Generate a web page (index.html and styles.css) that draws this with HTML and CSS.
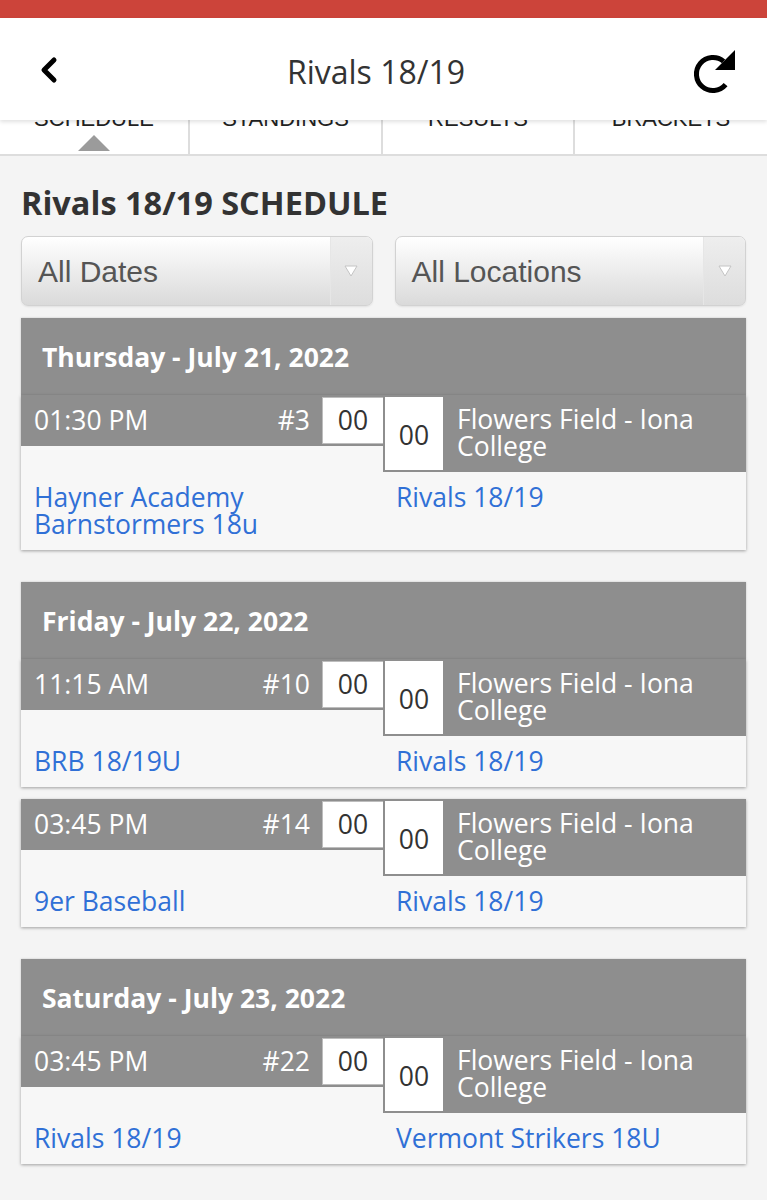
FILE: index.html
```html
<!DOCTYPE html>
<html lang="en">
<head>
  <meta charset="UTF-8" />
  <meta name="viewport" content="width=device-width, initial-scale=1" />
  <title>Rivals 18/19</title>
  <link rel="stylesheet" href="styles.css">
</head>
<body>

  <!-- Status strip -->
  <div class="statusbar"></div>

  <!-- Header -->
  <div class="topbar">
    <button class="icon-btn back" aria-label="Back">
      <svg width="22" height="28" viewBox="0 0 22 28">
        <polyline points="16,4 6,14 16,24" fill="none" stroke="#000" stroke-width="5" stroke-linecap="round" stroke-linejoin="round" />
      </svg>
    </button>
    <h2 class="page-title">Rivals 18/19</h2>
    <button class="icon-btn refresh" aria-label="Refresh">
      <svg width="46" height="46" viewBox="0 0 46 46">
        <path d="M33.6 36.6 A16.5 16.5 0 1 1 31.6 13.4" fill="none" stroke="#000" stroke-width="5" />
        <polygon points="43,2 43,22 23,22" fill="#000" />
      </svg>
    </button>
  </div>

  <!-- Tabs -->
  <div class="tabs">
    <div class="tab active"><span>Schedule</span><i class="caret"></i></div>
    <div class="tab"><span>Standings</span></div>
    <div class="tab"><span>Results</span></div>
    <div class="tab"><span>Brackets</span></div>
  </div>

  <div class="content">
    <h1 class="schedule-title">Rivals 18/19 SCHEDULE</h1>

    <div class="filters">
      <div class="select">
        <span>All Dates</span>
        <div class="select-arrow">
          <svg width="14" height="12" viewBox="0 0 14 12"><polygon points="1,1 13,1 7,11" fill="#fff" stroke="#c4c4c4" stroke-width="1" /></svg>
        </div>
      </div>
      <div class="select">
        <span>All Locations</span>
        <div class="select-arrow">
          <svg width="14" height="12" viewBox="0 0 14 12"><polygon points="1,1 13,1 7,11" fill="#fff" stroke="#c4c4c4" stroke-width="1" /></svg>
        </div>
      </div>
    </div>

    <!-- Thursday -->
    <div class="day">
      <div class="day-head">Thursday - July 21, 2022</div>
      <div class="game">
        <div class="game-left">
          <span class="time">01:30 PM</span>
          <span class="num">#3</span>
          <span class="score">00</span>
        </div>
        <div class="game-right">
          <span class="score">00</span>
          <span class="place">Flowers Field - Iona College</span>
        </div>
        <a class="team" href="#">Hayner Academy Barnstormers 18u</a>
        <a class="team" href="#">Rivals 18/19</a>
      </div>
    </div>

    <!-- Friday -->
    <div class="day">
      <div class="day-head">Friday - July 22, 2022</div>
      <div class="game">
        <div class="game-left">
          <span class="time">11:15 AM</span>
          <span class="num">#10</span>
          <span class="score">00</span>
        </div>
        <div class="game-right">
          <span class="score">00</span>
          <span class="place">Flowers Field - Iona College</span>
        </div>
        <a class="team" href="#">BRB 18/19U</a>
        <a class="team" href="#">Rivals 18/19</a>
      </div>
      <div class="game">
        <div class="game-left">
          <span class="time">03:45 PM</span>
          <span class="num">#14</span>
          <span class="score">00</span>
        </div>
        <div class="game-right">
          <span class="score">00</span>
          <span class="place">Flowers Field - Iona College</span>
        </div>
        <a class="team" href="#">9er Baseball</a>
        <a class="team" href="#">Rivals 18/19</a>
      </div>
    </div>

    <!-- Saturday -->
    <div class="day">
      <div class="day-head">Saturday - July 23, 2022</div>
      <div class="game">
        <div class="game-left">
          <span class="time">03:45 PM</span>
          <span class="num">#22</span>
          <span class="score">00</span>
        </div>
        <div class="game-right">
          <span class="score">00</span>
          <span class="place">Flowers Field - Iona College</span>
        </div>
        <a class="team" href="#">Rivals 18/19</a>
        <a class="team" href="#">Vermont Strikers 18U</a>
      </div>
    </div>
  </div>

</body>
</html>
```

FILE: styles.css
```css
body {
  margin: 0;
  padding: 0;
  font-family: 'Open Sans', 'Liberation Sans', sans-serif;
  background-color: #f4f4f4;
  color: #333;
  overflow-x: hidden;
}

.statusbar {
  height: 18px;
  background: #cc443a;
}

/* Header */
.topbar {
  position: relative;
  z-index: 2;
  height: 102px;
  background: white;
  display: flex;
  align-items: center;
  justify-content: space-between;
  padding: 0 29px 0 38px;
  box-shadow: 0 2px 4px rgba(0,0,0,0.12);
}

.icon-btn {
  background: none;
  border: none;
  padding: 0;
  display: flex;
}

.back {
  margin-top: 2px;
}

.refresh {
  margin-top: 4px;
}

.page-title {
  margin: 0;
  font-weight: 400;
  font-size: 32px;
  color: #333;
  margin-top: 4px;
}

/* Tabs */
.tabs {
  position: relative;
  z-index: 1;
  margin-top: -26px;
  display: grid;
  grid-template-columns: 190px 193px 192px 1fr;
  background: white;
  border-bottom: 2px solid #dddddd;
}

.tab {
  display: flex;
  flex-direction: column;
  align-items: center;
  padding-top: 12px;
  height: 48px;
  border-right: 2px solid #dddddd;
  font-family: 'Liberation Sans', Arial, sans-serif;
  font-size: 22px;
  line-height: 26px;
  text-transform: uppercase;
  color: #222;
}

.tab:last-child {
  border-right: none;
}

.caret {
  margin-top: 3px;
  width: 0;
  height: 0;
  border-left: 16px solid transparent;
  border-right: 16px solid transparent;
  border-bottom: 16px solid #9b9b9b;
}

/* Content */
.content {
  padding: 0 21px 40px;
}

.schedule-title {
  margin: 0;
  padding-top: 27px;
  font-size: 32.5px;
  line-height: 40px;
  font-weight: 700;
  color: #333;
}

.filters {
  display: grid;
  grid-template-columns: 1fr 1fr;
  gap: 22px;
  margin-top: 13px;
}

.select {
  height: 68px;
  display: flex;
  align-items: stretch;
  border: 1px solid #d2d2d2;
  border-radius: 7px;
  background: linear-gradient(#ffffff, #dadada);
  box-shadow: 0 1px 2px rgba(0,0,0,0.08);
  overflow: hidden;
}

.select span {
  flex: 1;
  display: flex;
  align-items: center;
  padding-left: 16px;
  font-family: 'Liberation Sans', Arial, sans-serif;
  font-size: 30px;
  color: #555;
  padding-top: 2px;
}

.select-arrow {
  width: 41px;
  display: flex;
  align-items: center;
  justify-content: center;
  background: linear-gradient(#eeeeee, #dddddd);
  border-left: 1px solid #e6e6e6;
}

/* Day cards */
.day {
  margin-top: 12px;
  margin-bottom: 32px;
}

.day-head {
  height: 77px;
  display: flex;
  align-items: center;
  padding-left: 21px;
  background: #8e8e8e;
  color: white;
  font-weight: 700;
  font-size: 26.5px;
  box-shadow: 0 0 2px rgba(0,0,0,0.2);
}

.game {
  display: grid;
  grid-template-columns: 362px 1fr;
  align-items: start;
  background: #f7f7f7;
  box-shadow: 0 1px 3px rgba(0,0,0,0.35);
  margin-bottom: 12px;
  font-size: 26.5px;
  line-height: 27px;
}

.game:last-child {
  margin-bottom: 0;
}

.game-left {
  height: 51px;
  display: flex;
  align-items: center;
  background: #8e8e8e;
  color: white;
  padding-left: 13px;
}

.time {
  flex: 1;
}

.num {
  margin-right: 12px;
}

.score {
  flex-shrink: 0;
  background: white;
  color: #333;
  display: flex;
  align-items: center;
  justify-content: center;
}

.game-left .score {
  width: 60px;
  height: 45px;
  border: 1px solid #bdbdbd;
  border-right: none;
}

.game-right {
  display: flex;
  background: #8e8e8e;
  color: white;
  border-bottom: 2px solid #8e8e8e;
  min-height: 75px;
}

.game-right .score {
  width: 58px;
  margin: 2px 0 0 2px;
  padding-top: 4px;
}

.place {
  padding: 11px 20px 0 14px;
}

.team {
  color: #3070d6;
  text-decoration: none;
  padding: 12px 20px 12px 13px;
}
```
